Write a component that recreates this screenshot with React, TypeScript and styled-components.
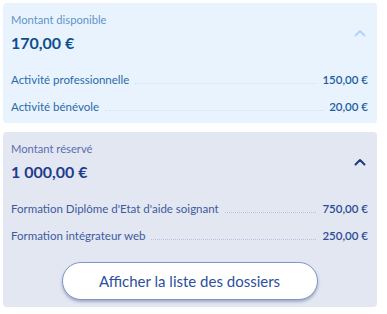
import React from "react";
import styled, { createGlobalStyle } from "styled-components";

const GlobalStyle = createGlobalStyle`
  html, body {
    margin: 0;
    padding: 0;
    background: #ffffff;
  }
  body {
    font-family: "Lato", "Noto Sans", sans-serif;
  }
`;

type Tone = "light" | "grey";

const palette = {
  light: {
    bg: "#e8f3fe",
    label: "#5f93c9",
    amount: "#0d4f8d",
    row: "#2b6aa9",
    value: "#1f5e9e",
    leader: "#cfe0f2",
    chevron: "#b3d4f6",
  },
  grey: {
    bg: "#e3e7f2",
    label: "#5a6eb0",
    amount: "#1f3c8c",
    row: "#3d5a9e",
    value: "#2d4c94",
    leader: "#b5c1df",
    chevron: "#1b3a7a",
  },
};

const Page = styled.div`
  width: 374px;
  padding: 3px;
  display: flex;
  flex-direction: column;
  gap: 9px;
`;

const Card = styled.section<{ $tone: Tone }>`
  background: ${(p) => palette[p.$tone].bg};
  border-radius: 4px;
  padding: 10px 9px 8px 8px;
  display: flex;
  flex-direction: column;
`;

const Header = styled.div`
  display: flex;
  align-items: flex-start;
  justify-content: space-between;
  margin-bottom: 19px;
`;

const Titles = styled.div`
  display: flex;
  flex-direction: column;
  gap: 6px;
`;

const Label = styled.div<{ $tone: Tone }>`
  font-size: 11.2px;
  color: ${(p) => palette[p.$tone].label};
  line-height: 14px;
`;

const Amount = styled.div<{ $tone: Tone }>`
  font-size: 16px;
  font-weight: 700;
  color: ${(p) => palette[p.$tone].amount};
  line-height: 20px;
`;

const Chevron = styled.svg<{ $tone: Tone }>`
  width: 12px;
  height: 8px;
  margin-right: 2px;
  margin-top: 16px;
  color: ${(p) => palette[p.$tone].chevron};
`;

const Rows = styled.div`
  display: flex;
  flex-direction: column;
  gap: 11px;
`;

const Row = styled.div`
  display: flex;
  align-items: baseline;
  height: 16px;
  line-height: 16px;
  font-size: 11.5px;
`;

const RowLabel = styled.span<{ $tone: Tone }>`
  color: ${(p) => palette[p.$tone].row};
  white-space: nowrap;
`;

const Leader = styled.span<{ $tone: Tone }>`
  flex: 1;
  margin: 0 6px 4px;
  border-bottom: 1px dotted ${(p) => palette[p.$tone].leader};
  align-self: flex-end;
`;

const Value = styled.span<{ $tone: Tone }>`
  color: ${(p) => palette[p.$tone].value};
  font-weight: 600;
  white-space: nowrap;
`;

const ButtonRow = styled.div`
  display: flex;
  justify-content: center;
  margin-top: 18px;
  margin-bottom: -1px;
`;

const ListButton = styled.button`
  width: 256px;
  height: 38px;
  border-radius: 19px;
  background: #ffffff;
  border: 1px solid #8197c9;
  box-shadow: 0 2px 3px rgba(40, 60, 110, 0.35);
  font-family: inherit;
  font-size: 15px;
  color: #2c4f9e;
  cursor: pointer;
`;

const ChevronUp = ({ tone }: { tone: Tone }) => (
  <Chevron $tone={tone} viewBox="0 0 12 8" fill="none">
    <path
      d="M1.5 6.5 L6 2 L10.5 6.5"
      stroke="currentColor"
      strokeWidth="2"
      strokeLinecap="round"
      strokeLinejoin="round"
    />
  </Chevron>
);

type Line = { label: string; value: string };

const AmountCard = ({
  tone,
  title,
  amount,
  lines,
  children,
}: {
  tone: Tone;
  title: string;
  amount: string;
  lines: Line[];
  children?: React.ReactNode;
}) => (
  <Card $tone={tone}>
    <Header>
      <Titles>
        <Label $tone={tone}>{title}</Label>
        <Amount $tone={tone}>{amount}</Amount>
      </Titles>
      <ChevronUp tone={tone} />
    </Header>
    <Rows>
      {lines.map((l) => (
        <Row key={l.label}>
          <RowLabel $tone={tone}>{l.label}</RowLabel>
          <Leader $tone={tone} />
          <Value $tone={tone}>{l.value}</Value>
        </Row>
      ))}
    </Rows>
    {children}
  </Card>
);

export default function App() {
  return (
    <>
      <GlobalStyle />
      <Page>
        <AmountCard
          tone="light"
          title="Montant disponible"
          amount="170,00 €"
          lines={[
            { label: "Activité professionnelle", value: "150,00 €" },
            { label: "Activité bénévole", value: "20,00 €" },
          ]}
        />
        <AmountCard
          tone="grey"
          title="Montant réservé"
          amount="1 000,00 €"
          lines={[
            { label: "Formation Diplôme d'Etat d'aide soignant", value: "750,00 €" },
            { label: "Formation intégrateur web", value: "250,00 €" },
          ]}
        >
          <ButtonRow>
            <ListButton>Afficher la liste des dossiers</ListButton>
          </ButtonRow>
        </AmountCard>
      </Page>
    </>
  );
}
